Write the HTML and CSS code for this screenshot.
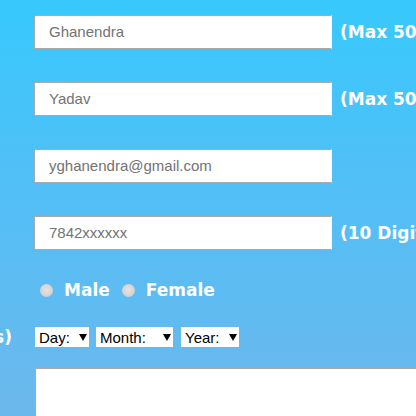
FILE: index.html
```html
<!DOCTYPE html>
<html>
<head>
<meta charset="utf-8">
<link rel="stylesheet" href="styles.css">
</head>
<body>
<form class="form">
  <div class="row">
    <div class="lbl"></div>
    <input class="txt" type="text" value="Ghanendra">
    <span class="note">(Max 50 characters a-z and A-Z)</span>
  </div>
  <div class="row">
    <div class="lbl"></div>
    <input class="txt" type="text" value="Yadav">
    <span class="note">(Max 50 characters a-z and A-Z)</span>
  </div>
  <div class="row">
    <div class="lbl"></div>
    <input class="txt" type="text" value="yghanendra@gmail.com">
  </div>
  <div class="row">
    <div class="lbl"></div>
    <input class="txt" type="text" value="7842xxxxxx">
    <span class="note">(10 Digit numbers)</span>
  </div>
  <div class="row gender">
    <div class="lbl"></div>
    <label class="opt"><input class="radio" type="radio" name="g"> Male</label>
    <label class="opt"><input class="radio" type="radio" name="g"> Female</label>
  </div>
  <div class="row dob">
    <div class="lbl"><span class="lbltext">Date Of Birth (DD/MM/YYYYs)</span></div>
    <select class="sel sel-day"><option>Day:</option></select>
    <select class="sel sel-month"><option>Month:</option></select>
    <select class="sel sel-year"><option>Year:</option></select>
  </div>
  <div class="row area">
    <div class="lbl"></div>
    <textarea class="ta"></textarea>
  </div>
</form>
</body>
</html>
```
FILE: styles.css
```css
html, body {
  margin: 0;
  padding: 0;
  width: 416px;
  height: 416px;
  overflow: hidden;
}
body {
  background: linear-gradient(to bottom, #37c9fd 0%, #4fc0f7 40%, #6cb8ec 100%);
}
.form {
  padding-top: 15px;
  display: flex;
  flex-direction: column;
}
.row {
  display: flex;
  align-items: center;
  white-space: nowrap;
  height: 33px;
  margin-bottom: 34px;
}
.lbl {
  width: 34px;
  flex: none;
  display: flex;
  justify-content: flex-end;
  overflow: visible;
}
.lbltext {
  font-family: "DejaVu Sans", Verdana, sans-serif;
  font-weight: bold;
  font-size: 17px;
  color: #fff;
  margin-right: 22px;
}
.txt {
  box-sizing: border-box;
  width: 298px;
  height: 34px;
  margin: 0;
  border: 1px solid #a9a9a9;
  border-right-color: #fff;
  background: #fff;
  padding: 0 0 0 14px;
  font-family: "Liberation Sans", Arial, sans-serif;
  font-size: 15px;
  color: #737373;
  outline: none;
  flex: none;
}
.note {
  margin-left: 8px;
  font-family: "DejaVu Sans", Verdana, sans-serif;
  font-weight: bold;
  font-size: 17px;
  color: #fff;
}
.gender {
  height: 20px;
  margin-top: -3px;
  margin-bottom: 27px;
}
.opt {
  display: flex;
  align-items: center;
  font-family: "DejaVu Sans", Verdana, sans-serif;
  font-weight: bold;
  font-size: 17px;
  color: #fff;
  margin-right: 12px;
}
.radio {
  appearance: none;
  -webkit-appearance: none;
  width: 13px;
  height: 13px;
  margin: 0 11px 0 6px;
  border-radius: 50%;
  background: radial-gradient(circle at 50% 45%, #e4e2e2 0%, #d6d3d3 60%, #c9c6c6 100%);
  border: none;
}
.opt + .opt .radio {
  margin-left: 0;
}
.dob {
  height: 20px;
  margin-bottom: 21px;
}
.sel {
  appearance: none;
  -webkit-appearance: none;
  box-sizing: border-box;
  height: 20px;
  margin: 0 7px 0 1px;
  border: none;
  border-radius: 0;
  padding: 0 0 0 4px;
  font-family: "Liberation Sans", Arial, sans-serif;
  font-size: 15px;
  color: #000;
  background: #fff url("data:image/svg+xml,%3Csvg xmlns='http://www.w3.org/2000/svg' width='8' height='7'%3E%3Cpath d='M0 0H8L4 7Z' fill='%23000'/%3E%3C/svg%3E") no-repeat;
  flex: none;
}
.sel-day { width: 54px; background-position: 44px 7px; }
.sel-month { width: 77px; margin-left: 0; background-position: 67px 7px; }
.sel-year { width: 58px; margin-left: 1px; background-position: 48px 7px; }
.area {
  height: auto;
  margin: 0;
  align-items: flex-start;
}
.ta {
  box-sizing: border-box;
  width: 400px;
  height: 120px;
  margin: 0 0 0 1px;
  border: 1px solid #a9a9a9;
  border-right: none;
  background: #fff;
  resize: none;
  flex: none;
}
```
